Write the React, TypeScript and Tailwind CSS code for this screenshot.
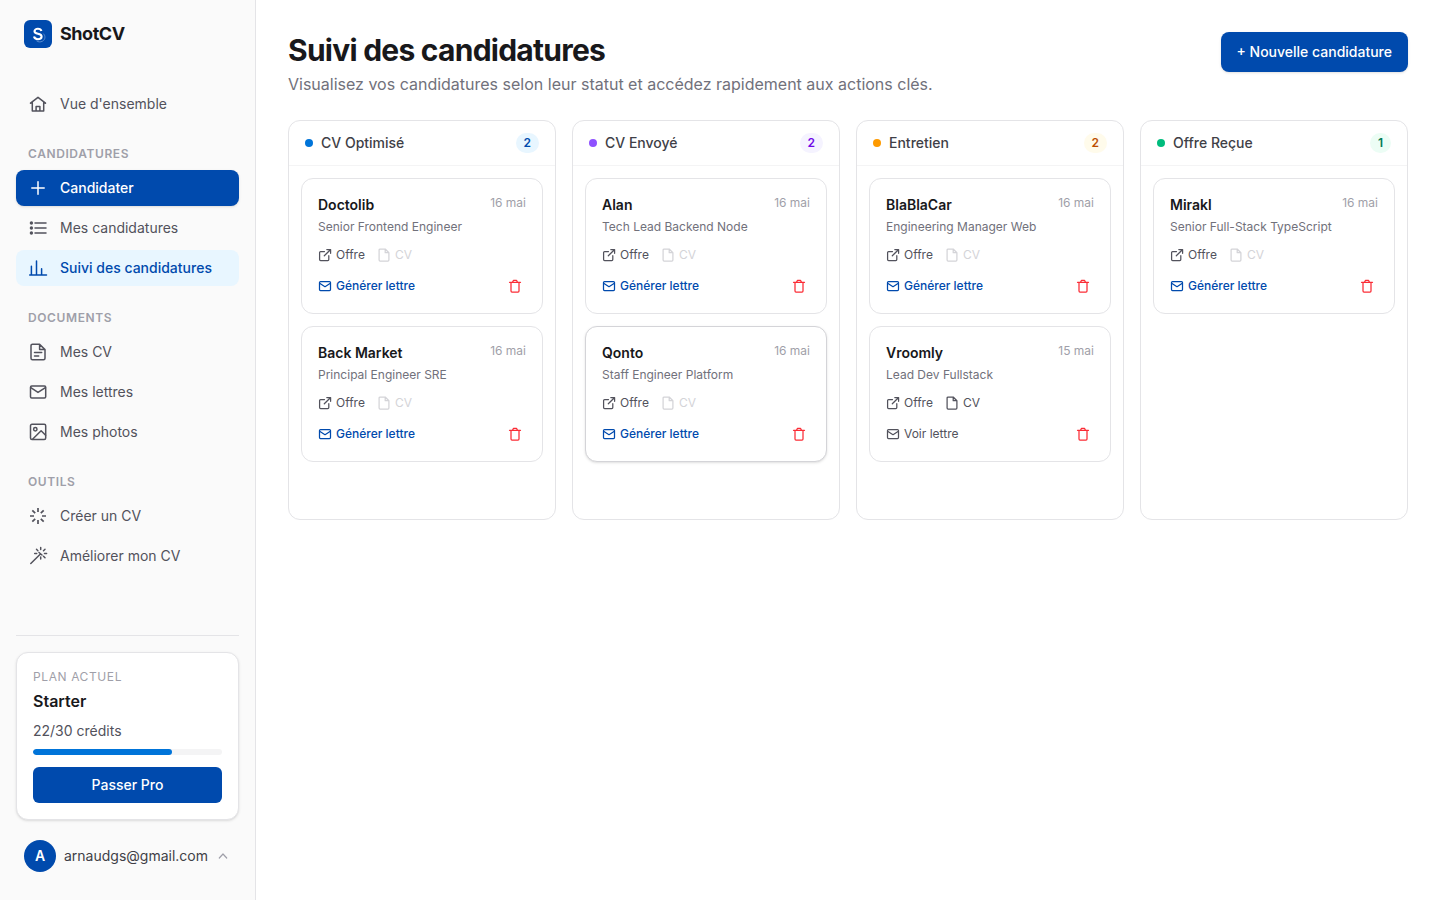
import type { ReactNode } from "react";
import clsx from "clsx";

type IconName =
  | "home"
  | "plus"
  | "list"
  | "chart"
  | "doc"
  | "mail"
  | "photo"
  | "spark"
  | "wand";

const navPaths: Record<IconName, ReactNode> = {
  home: <path d="M2.5 9.2 10 3.3l7.5 5.9M4.3 8v9h11.4V8M8.1 17v-4.5h3.8V17" />,
  plus: <path d="M10 3.8v12.4M3.8 10h12.4" />,
  list: (
    <>
      <path d="M7 5h11M7 10h11M7 15h11" />
      <g fill="currentColor" stroke="none">
        <circle cx="3.4" cy="5" r="1.7" />
        <circle cx="3.4" cy="10" r="1.7" />
        <circle cx="3.4" cy="15" r="1.7" />
      </g>
    </>
  ),
  chart: <path d="M1.7 17h16.8M3.4 16.5V8.2M8.5 16.5V3M13.6 16.5v-5.8" />,
  doc: (
    <path d="M11.6 2.2H4.5A1.5 1.5 0 0 0 3 3.7v12.6a1.5 1.5 0 0 0 1.5 1.5h11a1.5 1.5 0 0 0 1.5-1.5V7.6zM11.6 2.2v5.4H17M6.5 10.5h7.2M6.5 14h4.2" />
  ),
  mail: (
    <>
      <rect x="2.5" y="4" width="15.2" height="12" rx="1.2" />
      <path d="m2.8 5.6 7.2 4.8 7.4-4.8" />
    </>
  ),
  photo: (
    <>
      <rect x="2.5" y="2.3" width="15.2" height="15.3" rx="1.5" />
      <circle cx="7.3" cy="7.3" r="1.7" />
      <path d="m4.8 17 8.3-8.2 4.5 4.5" />
    </>
  ),
  spark: (
    <path
      strokeWidth="1.7"
      strokeLinecap="butt"
      d="M10 2v4M10 14v4M2 10h4M14 10h4M4.3 4.3l2.9 2.9M12.8 12.8l2.9 2.9M4.3 15.7l2.9-2.9M12.8 7.2l2.9-2.9"
    />
  ),
  wand: (
    <path d="m2.8 17.5 9.4-9.3M12.7 1.6v2M12.7 11v2M6.7 7.5h2M16.5 7.5h2.1M8.5 3.3l1.4 1.4M15.5 10.3l1.5 1.5M15.5 4.7 17 3.3M11 6.5l3 2.5" />
  ),
};

function NavIcon({ name }: { name: IconName }) {
  return (
    <svg
      viewBox="0 0 20 20"
      className="w-5 h-5 shrink-0"
      fill="none"
      stroke="currentColor"
      strokeWidth="1.5"
      strokeLinecap="round"
      strokeLinejoin="round"
      aria-hidden="true"
    >
      {navPaths[name]}
    </svg>
  );
}

const smallPaths = {
  external: (
    <path d="M6.5 3.6H2.6a1 1 0 0 0-1 1v7a1 1 0 0 0 1 1h7.2a1 1 0 0 0 1-1V7.7M8.8 1.5h3.8v3.8M12.4 1.7 6.3 7.8" />
  ),
  file: (
    <path d="M8.2 1H3.1a1 1 0 0 0-1 1v10a1 1 0 0 0 1 1h7.8a1 1 0 0 0 1-1V4.7zM8.2 1v3.7h3.7" />
  ),
  mail: (
    <>
      <rect x="1.5" y="2.5" width="11" height="9" rx="1" />
      <path d="M2 4.4 7 7.7l5-3.3" />
    </>
  ),
  trash: (
    <path d="M1.5 3.3h11M4.6 3.1l.8-1.7h3.2l.8 1.7M3 3.5v8.6a1 1 0 0 0 1 1h6a1 1 0 0 0 1-1V3.5" />
  ),
};

function SmallIcon({ name }: { name: keyof typeof smallPaths }) {
  return (
    <svg
      viewBox="0 0 14 14"
      className="w-3.5 h-3.5 shrink-0"
      fill="none"
      stroke="currentColor"
      strokeWidth="1.25"
      strokeLinecap="round"
      strokeLinejoin="round"
      aria-hidden="true"
    >
      {smallPaths[name]}
    </svg>
  );
}

function NavItem({
  icon,
  label,
  variant = "default",
}: {
  icon: IconName;
  label: string;
  variant?: "default" | "primary" | "active";
}) {
  return (
    <li>
      <a
        href="#"
        className={clsx(
          "flex items-center gap-3 h-9 px-3 rounded-lg text-sm",
          variant === "default" && "text-zinc-600 hover:bg-zinc-100",
          variant === "primary" && "bg-[#004aad] text-white font-medium shadow-sm",
          variant === "active" && "bg-[#e8f6ff] text-[#004aad] font-medium"
        )}
      >
        <NavIcon name={icon} />
        <span>{label}</span>
      </a>
    </li>
  );
}

function NavSection({ title, children }: { title: string; children: ReactNode }) {
  return (
    <section className="mt-6">
      <h2 className="px-3 mb-2 text-xs font-semibold uppercase tracking-wider text-zinc-400">
        {title}
      </h2>
      <ul className="space-y-1">{children}</ul>
    </section>
  );
}

function Logo() {
  return (
    <svg viewBox="0 0 28 28" className="w-7 h-7" aria-hidden="true">
      <rect width="28" height="28" rx="6" fill="#004aad" />
      <path
        d="M17.4 11c-.4-1.400-1.700-2.200-3.500-2.200-2 0-3.400 1-3.400 2.500 0 1.700 1.500 2.100 3.400 2.500 2.100.4 3.700.9 3.700 2.700 0 1.700-1.600 2.700-3.700 2.700-2.100 0-3.500-.9-3.900-2.600"
        fill="none"
        stroke="#fff"
        strokeWidth="2.1"
      />
      <path
        d="M19.3 13.600c2.400 2.200 2.200 5.900-.8 7.600-2 1.100-4.500.9-6-.4"
        fill="none"
        stroke="#6f9bd6"
        strokeWidth="0.8"
      />
    </svg>
  );
}

function Sidebar() {
  return (
    <aside className="w-64 shrink-0 flex flex-col bg-[#fafafa] border-r border-zinc-200">
      <a href="#" className="flex items-center gap-2 px-6 pt-5 text-lg font-bold tracking-tight text-zinc-900">
        <Logo />
        <span>ShotCV</span>
      </a>

      <nav className="flex-1 px-4 pt-[38px] pb-4">
        <ul>
          <NavItem icon="home" label="Vue d'ensemble" />
        </ul>
        <NavSection title="Candidatures">
          <NavItem icon="plus" label="Candidater" variant="primary" />
          <NavItem icon="list" label="Mes candidatures" />
          <NavItem icon="chart" label="Suivi des candidatures" variant="active" />
        </NavSection>
        <NavSection title="Documents">
          <NavItem icon="doc" label="Mes CV" />
          <NavItem icon="mail" label="Mes lettres" />
          <NavItem icon="photo" label="Mes photos" />
        </NavSection>
        <NavSection title="Outils">
          <NavItem icon="spark" label="Créer un CV" />
          <NavItem icon="wand" label="Améliorer mon CV" />
        </NavSection>
      </nav>

      <div className="mx-4 pt-4 pb-5 border-t border-zinc-200">
        <div className="p-4 bg-white border border-zinc-200 rounded-xl shadow-sm">
          <p className="text-xs uppercase tracking-wider text-zinc-400">Plan actuel</p>
          <p className="mt-1 text-base font-semibold text-zinc-900">Starter</p>
          <p className="mt-2 text-sm text-zinc-600">22/30 crédits</p>
          <div className="mt-2 h-1.5 rounded-full bg-zinc-100 overflow-hidden">
            <div
              className="h-full rounded-full bg-[#0074d9]"
              style={{ width: `${(22 / 30) * 100}%` }}
            />
          </div>
          <button
            type="button"
            className="mt-3 w-full h-9 rounded-md bg-[#004aad] text-white text-sm font-medium"
          >
            Passer Pro
          </button>
        </div>

        <button type="button" className="mt-3 w-full flex items-center p-2 text-sm text-zinc-700">
          <span className="w-8 h-8 mr-2 shrink-0 rounded-full bg-[#004aad] text-white font-semibold flex items-center justify-center">
            A
          </span>
          <span className="flex-1 text-left">arnaudgs@gmail.com</span>
          <svg
            viewBox="0 0 16 16"
            className="w-4 h-4 shrink-0 text-zinc-400"
            fill="none"
            stroke="currentColor"
            strokeWidth="1.2"
            strokeLinecap="round"
            strokeLinejoin="round"
            aria-hidden="true"
          >
            <path d="m4.3 10 3.700-4 3.700 4" />
          </svg>
        </button>
      </div>
    </aside>
  );
}

type Application = {
  company: string;
  role: string;
  date: string;
  hasCv?: boolean;
  hasLetter?: boolean;
  raised?: boolean;
};

type Column = {
  title: string;
  dot: string;
  badge: string;
  items: Application[];
};

const columns: Column[] = [
  {
    title: "CV Optimisé",
    dot: "bg-[#0074d9]",
    badge: "bg-[#e8f6ff] text-[#004aad]",
    items: [
      { company: "Doctolib", role: "Senior Frontend Engineer", date: "16 mai" },
      { company: "Back Market", role: "Principal Engineer SRE", date: "16 mai" },
    ],
  },
  {
    title: "CV Envoyé",
    dot: "bg-violet-500",
    badge: "bg-violet-50 text-violet-700",
    items: [
      { company: "Alan", role: "Tech Lead Backend Node", date: "16 mai" },
      { company: "Qonto", role: "Staff Engineer Platform", date: "16 mai", raised: true },
    ],
  },
  {
    title: "Entretien",
    dot: "bg-amber-500",
    badge: "bg-amber-50 text-amber-700",
    items: [
      { company: "BlaBlaCar", role: "Engineering Manager Web", date: "16 mai" },
      { company: "Vroomly", role: "Lead Dev Fullstack", date: "15 mai", hasCv: true, hasLetter: true },
    ],
  },
  {
    title: "Offre Reçue",
    dot: "bg-emerald-500",
    badge: "bg-emerald-50 text-emerald-700",
    items: [{ company: "Mirakl", role: "Senior Full-Stack TypeScript", date: "16 mai" }],
  },
];

function ApplicationCard({ item }: { item: Application }) {
  return (
    <article
      className={clsx(
        "p-4 bg-white border rounded-xl text-xs",
        item.raised ? "border-zinc-300 shadow-sm" : "border-zinc-200"
      )}
    >
      <div className="flex items-start justify-between gap-2">
        <h3 className="text-sm font-semibold text-zinc-900">{item.company}</h3>
        <time className="text-zinc-400">{item.date}</time>
      </div>
      <p className="mt-1 text-zinc-500">{item.role}</p>
      <div className="mt-3 flex items-center gap-3">
        <a href="#" className="flex items-center gap-1 text-zinc-600">
          <SmallIcon name="external" />
          Offre
        </a>
        <button
          type="button"
          disabled={!item.hasCv}
          className={clsx("flex items-center gap-1", item.hasCv ? "text-zinc-600" : "text-zinc-300")}
        >
          <SmallIcon name="file" />
          CV
        </button>
      </div>
      <div className="mt-3 flex items-center justify-between">
        <button
          type="button"
          className={clsx(
            "flex items-center gap-1",
            item.hasLetter ? "text-zinc-600" : "text-[#004aad] font-medium"
          )}
        >
          <SmallIcon name="mail" />
          {item.hasLetter ? "Voir lettre" : "Générer lettre"}
        </button>
        <button type="button" aria-label="Supprimer" className="p-1 text-[#fb2c36]">
          <SmallIcon name="trash" />
        </button>
      </div>
    </article>
  );
}

function BoardColumn({ column }: { column: Column }) {
  return (
    <section className="min-h-[400px] bg-white border border-zinc-200 rounded-xl">
      <header className="flex items-center gap-2 px-4 py-3 border-b border-zinc-100">
        <span className={clsx("w-2 h-2 rounded-full", column.dot)} />
        <h2 className="flex-1 text-sm font-medium text-zinc-700">{column.title}</h2>
        <span className={clsx("px-2 py-0.5 rounded-full text-xs font-semibold", column.badge)}>
          {column.items.length}
        </span>
      </header>
      <div className="p-3 space-y-3">
        {column.items.map((item) => (
          <ApplicationCard key={item.company} item={item} />
        ))}
      </div>
    </section>
  );
}

export default function App() {
  return (
    <div className="min-h-screen flex bg-white font-['Inter',sans-serif]">
      <Sidebar />
      <main className="flex-1 min-w-0 p-8">
        <div className="flex items-start justify-between gap-4 mb-6">
          <div>
            <h1 className="text-3xl font-bold tracking-tight text-zinc-900">Suivi des candidatures</h1>
            <p className="mt-1 text-base text-zinc-500">
              Visualisez vos candidatures selon leur statut et accédez rapidement aux actions clés.
            </p>
          </div>
          <button
            type="button"
            className="h-10 px-4 rounded-lg bg-[#004aad] text-white text-sm font-medium shadow-sm whitespace-nowrap"
          >
            + Nouvelle candidature
          </button>
        </div>
        <div className="grid grid-cols-4 gap-4">
          {columns.map((column) => (
            <BoardColumn key={column.title} column={column} />
          ))}
        </div>
      </main>
    </div>
  );
}
